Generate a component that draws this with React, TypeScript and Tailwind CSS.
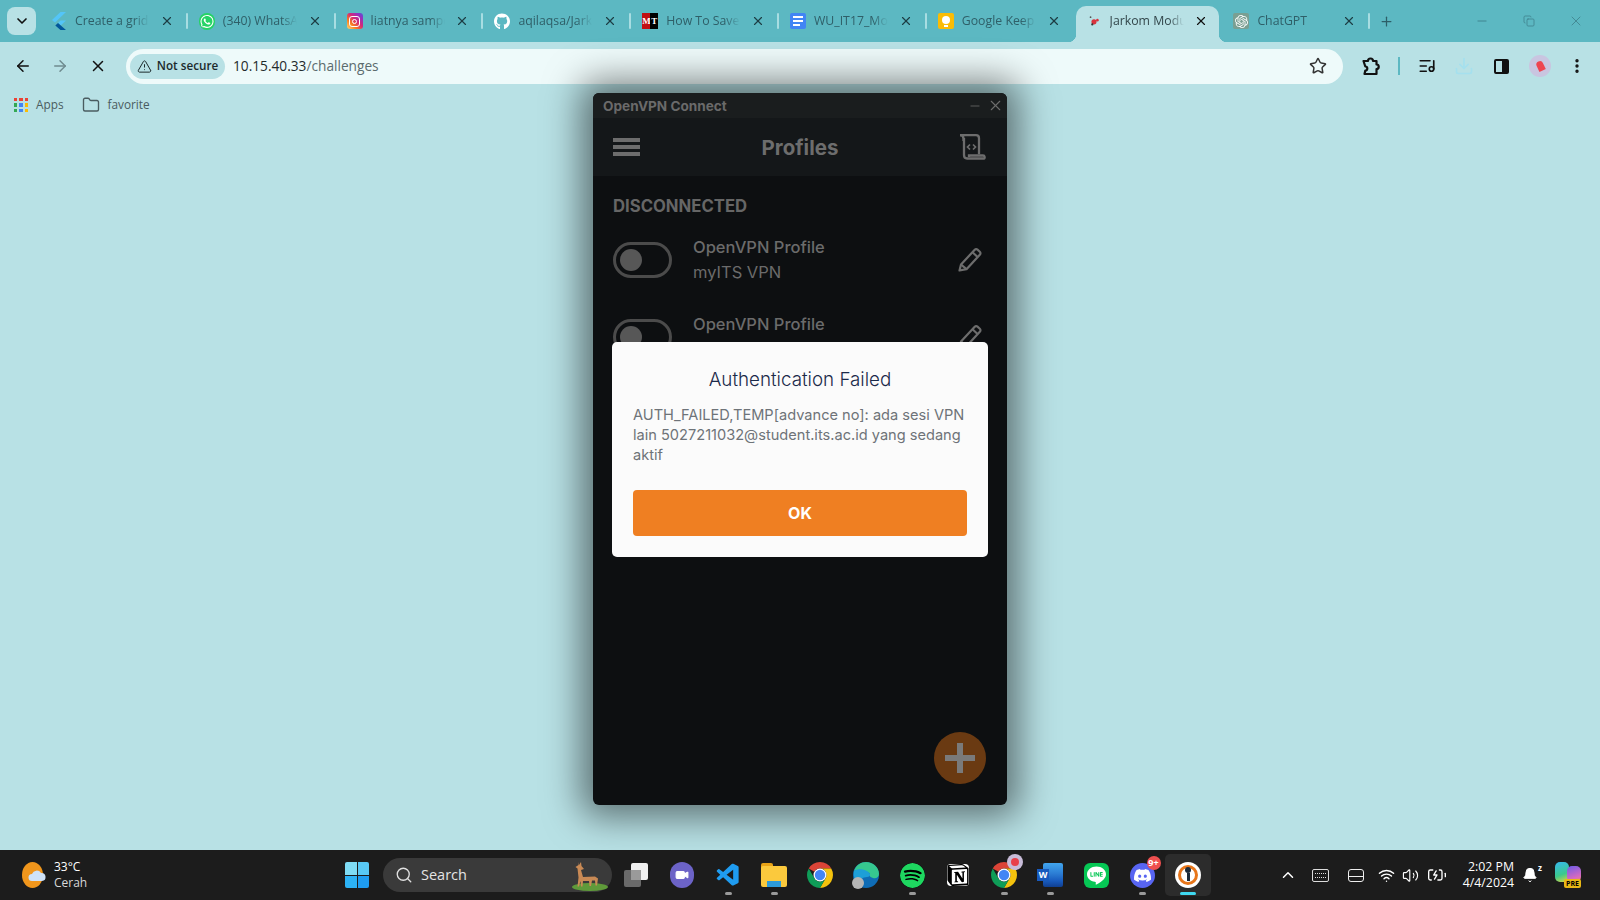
import type { ReactNode } from 'react'
import {
  ArrowLeft,
  ArrowRight,
  BatteryCharging,
  Bell,
  ChevronDown,
  ChevronUp,
  Copy,
  Download,
  EllipsisVertical,
  Folder,
  ListMusic,
  Minus,
  Plus,
  Search,
  Star,
  TriangleAlert,
  Video,
  Volume2,
  Wifi,
  X,
} from 'lucide-react'
import { FaGithub, FaWhatsapp } from 'react-icons/fa'
import { SiDiscord, SiLine, SiNotion, SiOpenai, SiSpotify } from 'react-icons/si'
import { VscVscode } from 'react-icons/vsc'

function ChromeLogo({ size = 26 }: { size?: number }) {
  return (
    <svg width={size} height={size} viewBox="4 4 40 40">
      <path d="M24 4A20 20 0 0 1 41.32 14H24A10 10 0 0 0 15.34 19L6.68 14A20 20 0 0 1 24 4Z" fill="#db4437" />
      <path d="M41.32 14A20 20 0 0 1 24 44L32.66 29A10 10 0 0 0 24 14Z" fill="#f4c20d" />
      <path d="M24 44A20 20 0 0 1 6.68 14L15.34 29A10 10 0 0 0 32.66 29Z" fill="#0f9d58" />
      <circle cx="24" cy="24" r="10" fill="#fff" />
      <circle cx="24" cy="24" r="8" fill="#4285f4" />
    </svg>
  )
}

function FlutterIcon() {
  return (
    <svg width="16" height="18" viewBox="0 0 16 18">
      <path d="M9.5 0H15L4 10.5 1 8Z" fill="#54c5f8" />
      <path d="M9.5 8.5H15L9.8 13.5 7 11Z" fill="#54c5f8" />
      <path d="M7 11l2.8 2.5L15 18H9.5L4.3 13.6Z" fill="#01579b" />
    </svg>
  )
}

function InstagramIcon() {
  return (
    <div className="flex h-4 w-4 items-center justify-center rounded-[3px] bg-[linear-gradient(45deg,#feda75,#fa7e1e_30%,#d62976_55%,#962fbf_80%,#4f5bd5)]">
      <div className="flex h-[11px] w-[11px] items-center justify-center rounded-[3px] border border-white">
        <div className="h-[5px] w-[5px] rounded-full border border-white" />
      </div>
    </div>
  )
}

function MtIcon() {
  return (
    <div className="flex h-4 w-4 items-center text-[9px] font-bold leading-4 text-white [font-family:'Liberation_Serif',serif]">
      <span className="h-4 w-2 bg-[#c10f12] text-center">M</span>
      <span className="h-4 w-2 bg-black text-center">T</span>
    </div>
  )
}

function DocsIcon() {
  return (
    <div className="flex h-4 w-4 flex-col justify-center gap-[2px] rounded-[2px] bg-[#4285f4] px-[3px]">
      <div className="h-[2px] w-full bg-white" />
      <div className="h-[2px] w-full bg-white" />
      <div className="h-[2px] w-2/3 bg-white" />
    </div>
  )
}

function KeepIcon() {
  return (
    <div className="flex h-4 w-4 flex-col items-center justify-center rounded-[2px] bg-[#fbbc04]">
      <div className="h-[8px] w-[8px] rounded-full bg-white" />
      <div className="mt-[1px] h-[2px] w-[4px] bg-white" />
    </div>
  )
}

function JarkomIcon() {
  return (
    <svg width="12" height="12" viewBox="0 0 14 14">
      <circle cx="3" cy="2.500" r="1" fill="#555" />
      <circle cx="7" cy="8" r="3" fill="#d8323c" />
      <circle cx="11" cy="6" r="1.500" fill="#d8323c" />
      <circle cx="5" cy="11" r="1.300" fill="#333" />
    </svg>
  )
}

function ChatGptIcon() {
  return (
    <div className="flex h-4 w-4 items-center justify-center rounded-[2px] bg-[#7a9f92] text-white">
      <SiOpenai size={13} />
    </div>
  )
}

function ExtensionIcon() {
  return (
    <svg width="20" height="20" viewBox="0 0 20 20" fill="none" stroke="#111" strokeWidth="2.200" strokeLinejoin="round">
      <path d="M2.500 5h4.500a2.500 2.500 0 0 1 5 0h3.500v3.500a2.200 2.200 0 0 1 0 4.500v5H3.500l.8-3.500a2 2 0 0 0 0-4L2.500 5Z" />
    </svg>
  )
}

function PencilIcon() {
  return (
    <svg width="26" height="26" viewBox="0 0 26 26" fill="none" stroke="#6d6d6d" strokeWidth="2.200" strokeLinejoin="round">
      <path d="M4 18.500 17.500 4c1-1 2.200-1 3-.3l2.300 2.100c.9.8.9 2 0 3L9.500 23.200 2.500 24.500Z" />
      <path d="M15.500 6.200 20.800 11.200" />
      <path d="M4 18.500 9.500 23.200" />
    </svg>
  )
}

function ProfileDocIcon() {
  return (
    <svg width="27" height="26" viewBox="0 0 27 26" fill="none" stroke="#6d6d6d" strokeWidth="2.300">
      <path d="M1 1.200h16c2 0 3 1 3 3v16" />
      <path d="M1 1.200c2 0 3.500 1.500 3.500 3.500V7" />
      <path d="M5 4v17c0 2 1 3.500 3 3.500h17c1 0 1-3-1-3H10v1.500" />
      <path d="M11 10.500l-2.500 2.500 2.500 2.500M14 10.500l2.500 2.500-2.500 2.500" strokeWidth="1.700" />
    </svg>
  )
}

function WindowsLogo() {
  return (
    <div className="grid h-[26px] w-[24px] grid-cols-2 gap-[1px]">
      <div className="rounded-tl-[2px] bg-[#7fdcf5]" />
      <div className="rounded-tr-[2px] bg-[#58c8f5]" />
      <div className="rounded-bl-[2px] bg-[#2cb2f5]" />
      <div className="rounded-br-[2px] bg-[#1e9cf0]" />
    </div>
  )
}

function WeatherIcon() {
  return (
    <svg width="24" height="26" viewBox="0 0 24 26">
      <ellipse cx="10.500" cy="13" rx="10.500" ry="13" fill="#f0961c" />
      <path d="M10 19a3.500 3.500 0 0 1 0-7 5 5 0 0 1 9-1 4 4 0 0 1 1 8Z" fill="#cfe2f8" />
    </svg>
  )
}

function DeerIcon() {
  return (
    <svg width="38" height="34" viewBox="0 0 38 34">
      <ellipse cx="20" cy="29" rx="18" ry="4" fill="#5f9a3a" />
      <path d="M8 4l1 3 2-3 .5 4 2.500 3-3 1 2 7 12-.5 3 2-1 7h-1.500l-.5-5-3 0-1 5.500h-1.500l-.5-5-6 0-.5 5.500h-1.500l-.5-5.500-1.500 5.500h-1.500l1-9-1-9-2-1.500 3-2Z" fill="#c98a55" />
    </svg>
  )
}

function TaskViewIcon() {
  return (
    <div className="relative h-6 w-6">
      <div className="absolute bottom-0 left-0 h-[17px] w-[17px] rounded-[2px] bg-[#6a6a6a]" />
      <div className="absolute right-0 top-0 h-[17px] w-[17px] rounded-[2px] bg-[#f0f0f0]" />
      <div className="absolute bottom-[7px] left-[7px] h-[10px] w-[10px] bg-[#9a9a9a]" />
    </div>
  )
}

function EdgeIcon() {
  return (
    <div className="relative h-[26px] w-[26px]">
      <svg width="26" height="26" viewBox="0 0 26 26">
        <circle cx="13" cy="13" r="13" fill="#0f6cb5" />
        <path d="M1 9C3 3 8 0 13 0c7 0 13 5 13 12 0 3-3 5-6 4-3-.8-4-2-3-4-3-4-12-5-16-3Z" fill="#36c78f" />
        <path d="M1 9c4-3 13-2 16 3 .5 2-1 3-3 3-4 .5-8 2-9 7-3-3-5-8-4-13Z" fill="#1d9fd8" />
      </svg>
      <div className="absolute -left-[1px] bottom-[-1px] h-3 w-3 rounded-full bg-[#b5b5b5]" />
    </div>
  )
}

function FilesIcon() {
  return (
    <div className="relative h-6 w-[26px]">
      <div className="absolute left-0 top-0 h-2 w-3 rounded-t-[2px] bg-[#e8a317]" />
      <div className="absolute inset-x-0 bottom-0 top-[3px] rounded-[2px] bg-[#fbc93d]" />
      <div className="absolute bottom-0 left-[6px] h-[6px] w-[14px] bg-[#2d9ad8]" />
    </div>
  )
}

function WordIcon() {
  return (
    <div className="relative h-6 w-[26px]">
      <div className="absolute bottom-0 right-0 top-0 w-5 rounded-[2px] bg-[linear-gradient(#41a5ee,#2b7cd3_45%,#185abd_75%,#103f91)]" />
      <div className="absolute left-0 top-[6px] flex h-3 w-3 items-center justify-center bg-[#185abd] text-[9px] font-bold text-white">W</div>
    </div>
  )
}

function OpenVpnIcon() {
  return (
    <div className="flex h-[26px] w-[26px] items-center justify-center rounded-full bg-white">
      <div className="flex h-5 w-5 items-center justify-center rounded-full border-[3px] border-[#e8761a]">
        <div className="flex h-4 w-[6px] flex-col items-center">
          <div className="h-[6px] w-[6px] rounded-full bg-[#1b2a3a]" />
          <div className="h-[8px] w-[3px] bg-[#1b2a3a]" />
        </div>
      </div>
    </div>
  )
}

function CopilotIcon() {
  return (
    <div className="relative h-[26px] w-[26px]">
      <div className="absolute left-0 top-0 h-5 w-[14px] rounded-[5px] bg-[linear-gradient(160deg,#37b8f0,#3bc98c_60%,#e6d53a)]" />
      <div className="absolute right-0 top-[4px] h-4 w-[14px] rounded-[5px] bg-[linear-gradient(160deg,#6d5be8,#d86ac0_70%,#f09060)]" />
      <div className="absolute bottom-0 right-0 rounded-[2px] bg-[#e9b816] px-[2px] text-[7px] font-bold leading-[9px] text-black">PRE</div>
    </div>
  )
}

const tabs: { title: string; icon: ReactNode; active?: boolean }[] = [
  { title: 'Create a grid', icon: <FlutterIcon /> },
  { title: '(340) WhatsApp', icon: <FaWhatsapp size={17} className="rounded-full bg-[#25d366] p-[1px] text-white" /> },
  { title: 'liatnya sampe', icon: <InstagramIcon /> },
  { title: 'aqilaqsa/Jarkom', icon: <FaGithub size={17} className="text-white" /> },
  { title: 'How To Save', icon: <MtIcon /> },
  { title: 'WU_IT17_Modul', icon: <DocsIcon /> },
  { title: 'Google Keep', icon: <KeepIcon /> },
  { title: 'Jarkom Modul', icon: <JarkomIcon />, active: true },
  { title: 'ChatGPT', icon: <ChatGptIcon /> },
]

const taskbarApps: { icon: ReactNode; dot?: boolean; current?: boolean }[] = [
  { icon: <TaskViewIcon /> },
  {
    icon: (
      <div className="flex h-[26px] w-[24px] items-center justify-center rounded-full bg-[#6c63c7] text-white">
        <Video size={14} fill="white" />
      </div>
    ),
  },
  { icon: <VscVscode size={27} className="text-[#1f9cf0]" />, dot: true },
  { icon: <FilesIcon />, dot: true },
  { icon: <ChromeLogo /> },
  { icon: <EdgeIcon /> },
  { icon: <SiSpotify size={25} className="rounded-full bg-black text-[#1ed760]" />, dot: true },
  { icon: <SiNotion size={22} className="rounded-[4px] bg-white text-black" /> },
  {
    icon: (
      <div className="relative">
        <ChromeLogo />
        <div className="absolute -right-[6px] -top-[8px] flex h-4 w-4 items-center justify-center rounded-full bg-[#c8bcd8]">
          <div className="h-2 w-2 rounded-sm bg-[#e8404a]" />
        </div>
      </div>
    ),
    dot: true,
  },
  { icon: <WordIcon />, dot: true },
  {
    icon: (
      <div className="flex h-[25px] w-[25px] items-center justify-center rounded-[6px] bg-[#06c755] text-white">
        <SiLine size={19} />
      </div>
    ),
  },
  {
    icon: (
      <div className="relative flex h-[25px] w-[25px] items-center justify-center rounded-full bg-[#5865f2] text-white">
        <SiDiscord size={17} />
        <div className="absolute -right-[6px] -top-[7px] flex h-[14px] w-[14px] items-center justify-center rounded-full bg-[#ef5050] text-[9px] font-bold leading-none">9+</div>
      </div>
    ),
    dot: true,
  },
  { icon: <OpenVpnIcon />, current: true },
]

function ProfileRow({ name }: { name?: string }) {
  return (
    <div className="flex h-[77px] shrink-0 items-start pl-5 pr-6">
      <div className="mt-[25px] flex h-9 w-[59px] shrink-0 items-center rounded-full border-[3px] border-[#4b4b4b] pl-[4px]">
        <div className="h-[22px] w-[22px] rounded-full bg-[#575757]" />
      </div>
      <div className="ml-[21px] mt-[18px] flex flex-col">
        <span className="text-[16.5px] font-medium leading-[25px] text-[#6b6b6b]">OpenVPN Profile</span>
        {name && <span className="text-[16.5px] leading-[25px] text-[#6b6b6b]">{name}</span>}
      </div>
      <div className="ml-auto mt-[29px]">
        <PencilIcon />
      </div>
    </div>
  )
}

export default function App() {
  return (
    <div className="relative flex h-[900px] w-[1600px] flex-col overflow-hidden bg-[#b8e1e5] [font-family:'Open_Sans',sans-serif]">
      {/* tab strip */}
      <div className="flex h-[42px] shrink-0 items-center bg-[#5cb8c2] pl-[7px]">
        <div className="flex h-7 w-[29px] shrink-0 items-center justify-center rounded-lg bg-[#b8e1e5]">
          <ChevronDown size={16} strokeWidth={2.5} className="text-[#111]" />
        </div>
        <div className="ml-[3px] flex h-full">
          {tabs.map((tab, i) => (
            <div key={tab.title} className="relative flex h-full w-[147.8px] items-center pl-3">
              {tab.active && (
                <>
                  <div className="absolute inset-x-[2px] bottom-0 top-[6px] rounded-t-[10px] bg-[#b8e1e5]" />
                  <div className="absolute -left-[6px] bottom-0 h-2 w-2 bg-[radial-gradient(circle_at_0_0,transparent_8px,#b8e1e5_8.5px)]" />
                  <div className="absolute -right-[6px] bottom-0 h-2 w-2 bg-[radial-gradient(circle_at_100%_0,transparent_8px,#b8e1e5_8.5px)]" />
                </>
              )}
              <div className="relative flex w-4 shrink-0 items-center justify-center">{tab.icon}</div>
              <span
                className={
                  'relative ml-2 w-[74px] overflow-hidden whitespace-nowrap pt-[1px] text-[12.3px] [mask-image:linear-gradient(to_right,black_80%,transparent)] ' +
                  (tab.active ? 'text-[#33474b]' : 'text-[#2f5f68]')
                }
              >
                {tab.title}
              </span>
              <X size={14} strokeWidth={2} className={'relative ml-auto mr-[13px] ' + (tab.active ? 'text-[#111]' : 'text-[#1d3d44]')} />
              {!tab.active && i !== 6 && <div className="absolute -right-px top-[13px] h-4 w-[2px] rounded bg-[#a8dde2]" />}
            </div>
          ))}
        </div>
        <Plus size={15} strokeWidth={2} className="ml-[10px] text-[#2d5f68]" />
        <div className="ml-auto flex items-center text-[#3d7f89]">
          <div className="flex w-[47px] justify-center">
            <Minus size={14} strokeWidth={1.5} />
          </div>
          <div className="flex w-[47px] justify-center">
            <Copy size={12} strokeWidth={1.5} />
          </div>
          <div className="flex w-[48px] justify-center">
            <X size={16} strokeWidth={1.2} />
          </div>
        </div>
      </div>

      {/* toolbar */}
      <div className="flex h-[48px] shrink-0 items-center rounded-t-lg bg-[#b8e1e5] pl-[14px]">
        <ArrowLeft size={18} strokeWidth={2} className="text-[#111]" />
        <ArrowRight size={18} strokeWidth={2} className="ml-[19px] text-[#6f8b8f]" />
        <X size={18} strokeWidth={2} className="ml-5 text-[#111]" />
        <div className="ml-[19px] flex h-[35px] w-[1217px] items-center rounded-full bg-[#eefafa] pl-[4px] pr-4">
          <div className="flex h-[25px] w-[95px] items-center justify-center gap-[5px] rounded-full bg-[#b8e1e5]">
            <TriangleAlert size={15} strokeWidth={1.6} className="text-[#1c2a2c]" />
            <span className="text-[11.7px] font-semibold text-[#1c2a2c]">Not secure</span>
          </div>
          <span className="ml-[8px] text-[13.7px] text-[#1f2a2c]">
            10.15.40.33<span className="text-[#5b6b6e]">/challenges</span>
          </span>
          <Star size={18} strokeWidth={2} className="ml-auto text-[#333]" />
        </div>
        <div className="ml-[18px]">
          <ExtensionIcon />
        </div>
        <div className="ml-[17px] h-[18px] w-[2px] bg-[#5cb8c2]" />
        <ListMusic size={18} strokeWidth={2.2} className="ml-[18px] text-[#111]" />
        <Download size={20} strokeWidth={2} className="ml-[18px] text-[#a5e0ee]" />
        <div className="ml-[20px] flex h-[15px] w-[15px] rounded-[2px] border-2 border-[#111]">
          <div className="ml-auto h-full w-[5px] bg-[#111]" />
        </div>
        <div className="ml-[20px] flex h-[22px] w-[22px] items-center justify-center rounded-full bg-[#c9c5e0]">
          <div className="h-[10px] w-[7px] rotate-[-25deg] rounded-t-full rounded-b-sm bg-[#ee4450]" />
        </div>
        <EllipsisVertical size={18} strokeWidth={2.5} className="ml-[17px] text-[#111]" />
      </div>

      {/* bookmarks bar */}
      <div className="flex h-[30px] shrink-0 items-center pl-[14px] text-[11.8px] text-[#4a5c60]">
        <div className="grid h-[14px] w-[14px] grid-cols-3 gap-[2px]">
          <i className="bg-[#ea4335]" />
          <i className="bg-[#ea4335]" />
          <i className="bg-[#ea4335]" />
          <i className="bg-[#34a853]" />
          <i className="bg-[#4285f4]" />
          <i className="bg-[#fbbc04]" />
          <i className="bg-[#34a853]" />
          <i className="bg-[#4285f4]" />
          <i className="bg-[#fbbc04]" />
        </div>
        <span className="ml-2">Apps</span>
        <Folder size={18} strokeWidth={1.8} className="ml-[18px] text-[#4a5c60]" />
        <span className="ml-[8px]">favorite</span>
      </div>

      <div className="flex-1" />

      {/* OpenVPN window, floats over the browser */}
      <div className="absolute left-[593px] top-[93px] flex h-[712px] w-[414px] flex-col overflow-hidden rounded-md bg-[#0d0f11] shadow-[0_0_36px_12px_rgba(0,0,0,0.5)] [font-family:Inter,sans-serif]">
        <div className="flex h-[25px] shrink-0 items-center bg-[#1a1d1e] pl-[10px] pr-[3px]">
          <span className="pt-[1px] text-[13.6px] font-bold text-[#6a6a6a]">OpenVPN Connect</span>
          <Minus size={14} strokeWidth={1.5} className="ml-auto text-[#666]" />
          <X size={17} strokeWidth={1.5} className="ml-[5px] text-[#6d6d6d]" />
        </div>
        <div className="relative flex h-[58px] shrink-0 items-center justify-center bg-[#141719]">
          <div className="absolute left-5 flex w-[27px] flex-col gap-[3px]">
            <div className="h-1 bg-[#6d6d6d]" />
            <div className="h-1 bg-[#6d6d6d]" />
            <div className="h-1 bg-[#6d6d6d]" />
          </div>
          <span className="pt-[2px] text-[20.5px] font-bold text-[#6d6d6d]">Profiles</span>
          <div className="absolute right-[21px] top-[16px]">
            <ProfileDocIcon />
          </div>
        </div>
        <div className="pl-5 pt-[20px] pb-[1px] text-[16.7px] font-bold leading-[20px] text-[#666]">DISCONNECTED</div>
        <ProfileRow name="myITS VPN" />
        <ProfileRow />
        <div className="absolute bottom-[21px] right-[21px] flex h-[52px] w-[52px] items-center justify-center rounded-full bg-[#6a3a12]">
          <svg width="30" height="30" viewBox="0 0 30 30">
            <path d="M15 0v30M0 15h30" stroke="#7a7a7a" strokeWidth="6" />
          </svg>
        </div>

        {/* dialog */}
        <div className="absolute left-[19px] top-[249px] flex h-[215px] w-[376px] flex-col rounded-[5px] bg-[#fbfbfb] px-[21px] pt-[25px]">
          <h2 className="text-center text-[18.8px] font-light leading-[26px] text-[#1b2a4a]">Authentication Failed</h2>
          <p className="mt-[12px] text-[14.6px] leading-[20px] text-[#6e7378]">
            AUTH_FAILED,TEMP[advance no]: ada sesi VPN lain 5027211032@student.its.ac.id yang sedang aktif
          </p>
          <div className="mt-[25px] flex h-[46px] items-center justify-center rounded-[4px] bg-[#ef7f22] text-[16px] font-bold text-white">OK</div>
        </div>
      </div>

      {/* taskbar */}
      <div className="relative flex h-[50px] shrink-0 items-center bg-[#1c1c1c] text-white">
        <div className="ml-[22px] flex w-[323px] items-center">
          <WeatherIcon />
          <div className="ml-2 flex flex-col text-[12px] leading-[16px]">
            <span className="font-medium">33°C</span>
            <span className="text-[#d8d8d8]">Cerah</span>
          </div>
        </div>
        <WindowsLogo />
        <div className="ml-[14px] flex h-[34px] w-[229px] items-center rounded-full bg-[#3a3a3a] pl-3 pr-1">
          <Search size={18} strokeWidth={1.8} className="text-[#e0e0e0]" />
          <span className="ml-[8px] text-[14.5px] text-[#e4e4e4]">Search</span>
          <div className="ml-auto">
            <DeerIcon />
          </div>
        </div>
        <div className="ml-[1px] flex">
          {taskbarApps.map((app, i) => (
            <div key={i} className={'relative flex h-[42px] w-[46px] items-center justify-center rounded-[5px] ' + (app.current ? 'bg-[#2c2c2c]' : '')}>
              {app.icon}
              {app.dot && <div className="absolute bottom-[1px] left-[20px] h-[3px] w-[7px] rounded-full bg-[#9a9a9a]" />}
              {app.current && <div className="absolute bottom-[1px] left-[15px] h-[3px] w-4 rounded-full bg-[#3fd8f0]" />}
            </div>
          ))}
        </div>
        <div className="ml-[60px] flex items-center">
          <div className="flex w-[33px] justify-center">
            <ChevronUp size={18} strokeWidth={2} />
          </div>
          <div className="flex w-[33px] justify-center">
            <div className="flex h-[13px] w-[17px] items-center justify-center rounded-[2px] border border-[#ddd]">
              <div className="h-[5px] w-[11px] border-y border-dotted border-[#ddd]" />
            </div>
          </div>
          <div className="flex w-[37px] justify-center">
            <div className="flex h-[13px] w-[16px] flex-col justify-end rounded-[3px] border border-[#eee]">
              <div className="h-[5px] border-t border-[#eee]" />
            </div>
          </div>
          <div className="flex w-[24px] justify-center">
            <Wifi size={17} strokeWidth={2} />
          </div>
          <div className="flex w-[24px] justify-center">
            <Volume2 size={17} strokeWidth={1.6} />
          </div>
          <div className="flex w-[30px] justify-center">
            <BatteryCharging size={20} strokeWidth={1.6} />
          </div>
          <div className="flex w-[63px] flex-col items-end pr-[1px] text-[12.3px] leading-[16px]">
            <span>2:02 PM</span>
            <span>4/4/2024</span>
          </div>
          <div className="relative flex w-[30px] justify-center">
            <Bell size={16} fill="white" strokeWidth={1.5} />
            <span className="absolute right-[3px] -top-[3px] text-[8px] font-bold leading-none">z</span>
          </div>
          <div className="flex w-[46px] justify-center">
            <CopilotIcon />
          </div>
        </div>
      </div>
    </div>
  )
}
